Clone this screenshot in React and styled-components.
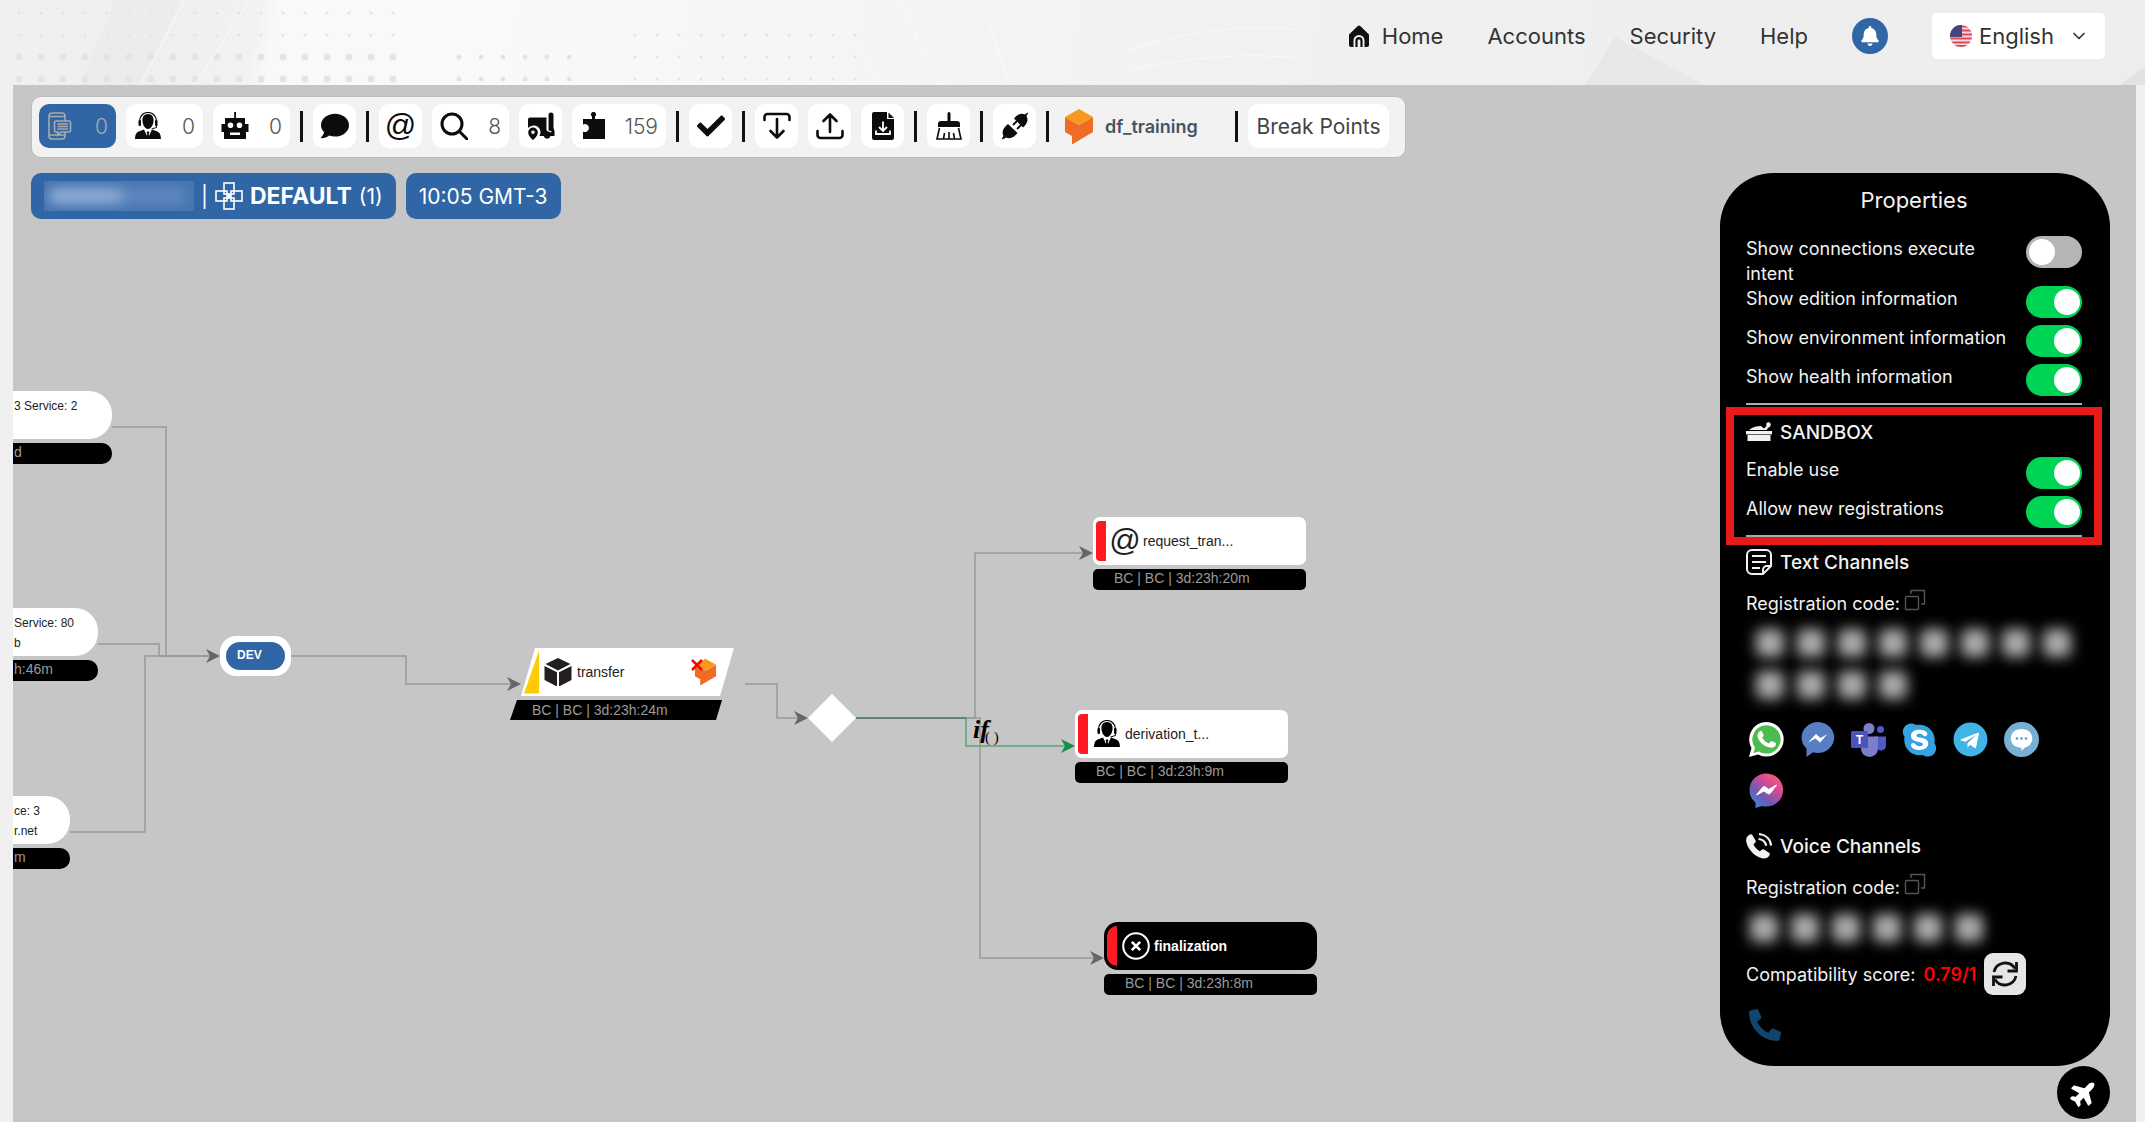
import React, { useState } from 'react';
import styled, { createGlobalStyle } from 'styled-components';
import { FaCheck, FaComment, FaBell, FaPlane, FaPhoneAlt, FaSkype, FaTelegram } from 'react-icons/fa';
import { LuChevronDown } from 'react-icons/lu';

const GlobalStyle = createGlobalStyle`
    * {
        box-sizing: border-box;
    }
    body {
        margin: 0;
        background: #f0f0f0;
        font-family: Inter, 'Open Sans', sans-serif;
        color: #333;
    }
    button, select, input {
        font: inherit;
        color: inherit;
        margin: 0;
    }
`;

/* ---------- icons ---------- */

const Svg = ({ size = 28, box = '0 0 28 28', children }) => (
    <svg width={size} height={size} viewBox={box} fill="currentColor" aria-hidden="true">{children}</svg>
);

const PhoneMessageIcon = () => (
    <Svg>
        <g fill="none" stroke="currentColor" strokeWidth="1.6">
            <rect x="2" y="1" width="16" height="26" rx="3" />
            <path d="M2 4.5h16M2 23h16" />
            <path d="M9 9h13a1.500 1.500 0 0 1 1.500 1.500v8a1.500 1.500 0 0 1-1.500 1.500h-8l-3 3v-3h-2a1.500 1.500 0 0 1-1.500-1.500v-8a1.500 1.500 0 0 1 1.500-1.500z" fill="#3066a6" />
            <path d="M10.500 12h10.500M10.500 14.500h10.500M10.500 17h10.500" />
        </g>
    </Svg>
);

const AgentIcon = () => (
    <Svg>
        <path d="M5.500 11v-2a8.500 8.500 0 0 1 17 0v2" fill="none" stroke="currentColor" strokeWidth="1.200" />
        <rect x="4.500" y="8" width="2.500" height="6" rx="1" />
        <rect x="21" y="8" width="2.500" height="6" rx="1" />
        <path d="M22.500 13v2.500l-5 1.500" fill="none" stroke="currentColor" strokeWidth="1" />
        <path d="M14 2c3.700 0 5.800 2.800 5.600 6.500-.2 4-2.400 8.500-5.600 8.500s-5.400-4.500-5.600-8.500C8.200 4.800 10.300 2 14 2z" />
        <path d="M1 27c.3-5 1.500-7 5-8l4-1.500L14 26l4-8.500 4 1.500c3.500 1 4.700 3 5 8z" />
        <path d="M14 19l1.500 1.500-.8 1.500.8 4.500h-3l.8-4.500-.8-1.500z" />
    </Svg>
);

const RobotIcon = () => (
    <Svg>
        <path fillRule="evenodd" d="M13.200 0h1.800v6H24v6h3.500v8H25v7H3v-7H.5v-8H4V6h9.200zM9.500 10.500a2.800 2.800 0 1 0 0 5.600 2.800 2.800 0 0 0 0-5.600zm9 0a2.800 2.800 0 1 0 0 5.600 2.800 2.800 0 0 0 0-5.600zM9 20.500V23h10v-2.500z" />
    </Svg>
);

const SearchIcon = () => (
    <Svg>
        <g fill="none" stroke="currentColor" strokeWidth="3" strokeLinecap="round">
            <circle cx="12" cy="12" r="10" />
            <path d="M19.500 19.500L27 27" />
        </g>
    </Svg>
);

const TruckIcon = () => (
    <Svg>
        <path d="M3 5.500h16.500V18h2V3a2.500 2.500 0 0 1 5 0v13l1 3v5h-4a3.500 3.500 0 0 1-6.800 0H12.500a7 7 0 0 0-2-9.500c-3-2-7-1-9.500 1.500V7.500a2 2 0 0 1 2-2z" />
        <path fillRule="evenodd" d="M6 15.500a4.800 4.800 0 0 1 4.800 4.800C10.800 24 7.500 27 6 28c-1.500-1-4.800-4-4.800-7.700A4.800 4.800 0 0 1 6 15.500zm0 3a1.800 1.800 0 1 0 0 3.600 1.800 1.800 0 0 0 0-3.600z" />
        <path d="M20.500 4v14.500l4 1.500" fill="none" stroke="#fff" strokeWidth="1.200" />
    </Svg>
);

const PuzzleIcon = () => (
    <Svg>
        <path d="M3 7h9V4.500a2.500 2.500 0 1 1 3 0V7h10v20H3v-7.500a4 4 0 1 0 0-7z" />
    </Svg>
);

const DownIcon = () => (
    <Svg>
        <g fill="none" stroke="currentColor" strokeWidth="2.600" strokeLinecap="round" strokeLinejoin="round">
            <path d="M1.500 8V5a3 3 0 0 1 3-3h19a3 3 0 0 1 3 3v3" />
            <path d="M14 7v18M7.500 19l6.500 6.500 6.500-6.500" />
        </g>
    </Svg>
);

const UpIcon = () => (
    <Svg>
        <g fill="none" stroke="currentColor" strokeWidth="2.600" strokeLinecap="round" strokeLinejoin="round">
            <path d="M1.500 19v4a3 3 0 0 0 3 3h19a3 3 0 0 0 3-3v-4" />
            <path d="M14 20V3M7.500 9L14 2.500 20.500 9" />
        </g>
    </Svg>
);

const FileIcon = () => (
    <Svg>
        <path d="M5 0h13v7h7v19a2 2 0 0 1-2 2H5a2 2 0 0 1-2-2V2a2 2 0 0 1 2-2z" />
        <path d="M19.500.5L25 6h-5.500z" />
        <path d="M14 9.500v9M10 15l4 4 4-4M7 18.500V22h14v-3.500" fill="none" stroke="#fff" strokeWidth="1.800" />
    </Svg>
);

const BroomIcon = () => (
    <Svg>
        <path d="M12.500 1.500a1.500 1.500 0 0 1 3 0V9H22a3 3 0 0 1 3 3v3H3v-3a3 3 0 0 1 3-3h6.500z" />
        <path d="M4.500 16L2 27h24l-2.500-11M8.500 27l1-6M14 27v-7M19.500 27l-1-6" fill="none" stroke="currentColor" strokeWidth="1.600" />
    </Svg>
);

const PlugIcon = () => (
    <Svg>
        <path d="M1 27c-.5-.5 1-2 1.500-3C.5 20 2 16 7 12l9.500 9c-3 4-7 6.500-11.500 4.500C4 26 1.800 27.800 1 27z" />
        <path d="M27 1c.5.5-1 2-1.500 3 2 4 1 7-3.500 11.500L13 6.500C17 2 20 .5 24 2.500 25 2 26.200.2 27 1z" />
        <path d="M16 9l-4 4M20 13l-4 4" stroke="currentColor" strokeWidth="1.800" />
    </Svg>
);

const HomeIcon = () => (
    <Svg size={22} box="0 0 22 22">
        <path d="M9.500 1.200a2.200 2.200 0 0 1 3 0L20.500 9c.4.400.5.800.5 1.400V20a2 2 0 0 1-2 2h-2.500v-6.500a5.500 5.500 0 0 0-11 0V22H3a2 2 0 0 1-2-2v-9.600c0-.6.1-1 .5-1.400z" />
        <path d="M7.400 22v-6.400a3.600 3.600 0 0 1 7.200 0V22h-2.200v-6a1.400 1.400 0 0 0-2.800 0v6z" />
    </Svg>
);

const CrossIcon = () => (
    <Svg>
        <g fill="none" stroke="currentColor" strokeWidth="1.600">
            <rect x="9" y="1" width="10" height="11" />
            <rect x="9" y="16" width="10" height="11" />
            <rect x="1" y="9" width="11" height="10" />
            <rect x="16" y="9" width="11" height="10" />
            <path d="M12 12l4 4M16 12l-4 4" />
        </g>
    </Svg>
);

const DialogflowLogo = ({ width = 30, height = 37 }) => (
    <svg width={width} height={height} viewBox="0 0 30 37" aria-hidden="true">
        <path d="M1 9v15l7 4v8.500L29 24V9l-14 8z" fill="#ee6c23" />
        <path d="M15 1L1 9l14 8 14-8z" fill="#f8991d" />
    </svg>
);

const CubeIcon = () => (
    <Svg>
        <g fill="#231f20">
            <path d="M14 0L1.500 6 14 12.500 26.500 6z" />
            <path d="M.5 8L13 14.300V28.500L.5 22z" />
            <path d="M27.500 8L15 14.300V28.500L27.500 22z" />
        </g>
    </Svg>
);

const CloseIcon = () => (
    <Svg>
        <g fill="none" stroke="currentColor" strokeWidth="2">
            <circle cx="14" cy="14" r="12.800" />
            <path d="M9.800 9.800l8.400 8.400M18.200 9.800l-8.400 8.400" strokeWidth="2.600" />
        </g>
    </Svg>
);

const SandboxIcon = () => (
    <Svg size={26} box="0 0 26 26">
        <path d="M0 12h26v3.500h-1.500V22h-23v-6.500H0z" />
        <path d="M3 11c4-3.500 8-4 12-4l3 2.500 2.500-2.500c-1-2.500 1-4.500 3-3.500 2 1 1.500 4.500-1 5L20.500 11z" />
        <path d="M1 15.500h24" stroke="#000" strokeWidth=".6" />
    </Svg>
);

const NoteIcon = () => (
    <Svg size={26} box="0 0 26 26">
        <g fill="none" stroke="currentColor" strokeWidth="2">
            <path d="M6 1h14a5 5 0 0 1 5 5v11l-8 8H6a5 5 0 0 1-5-5V6a5 5 0 0 1 5-5z" />
            <path d="M25 17h-4a4 4 0 0 0-4 4v4M6 7h14M6 13h14M6 19h8" />
        </g>
    </Svg>
);

const CallIcon = () => (
    <Svg size={26} box="0 0 26 26">
        <path d="M6.500 2.200l3 5.300c.5 1 .2 2-.6 2.600L7.500 11.300c1.200 3 3.500 5.500 6.500 7l1.600-1.500c.7-.7 1.700-.8 2.500-.3l4.900 3.200c.9.600 1.100 1.600.5 2.500C22 24.700 19.500 26 16 25.300 8 23.500 1 15 .2 8 0 5 1.200 3 3.800 1.600c1-.6 2.200-.4 2.700.6z" />
        <path d="M13 1c7 .8 11.500 5.500 12.200 11.500M12.500 6c4.200.3 7 3 7.700 6.800" fill="none" stroke="currentColor" strokeWidth="2.200" />
    </Svg>
);

const CopyIcon = () => (
    <Svg size={22} box="0 0 22 22">
        <g fill="none" stroke="#555" strokeWidth="1.400">
            <rect x="1.500" y="7.500" width="13" height="13" rx="1" />
            <path d="M7 5V1.500h13.500V15H17" />
        </g>
    </Svg>
);

const RefreshIcon = () => (
    <Svg>
        <g fill="none" stroke="currentColor" strokeWidth="2.800">
            <path d="M3 12A11.500 11.500 0 0 1 24 8.500M25 16A11.500 11.500 0 0 1 4 19.500" />
            <path d="M25.500 2v9h-9M2.500 26v-9h9" />
        </g>
    </Svg>
);

const FlagIcon = () => (
    <svg width="22" height="22" viewBox="0 0 22 22" aria-hidden="true">
        <clipPath id="flag"><circle cx="11" cy="11" r="11" /></clipPath>
        <g clipPath="url(#flag)">
            <path d="M0 0h22v22H0z" fill="#f6d9dc" />
            <path d="M0 1.500h22M0 5.500h22M0 9.500h22M0 13.500h22M0 17.500h22M0 21h22" stroke="#dc4a5c" strokeWidth="2" />
            <path d="M0 0h12v12H0z" fill="#46467f" />
        </g>
    </svg>
);

const WhatsappLogo = () => (
    <svg width="35" height="35" viewBox="0 0 35 35" aria-hidden="true">
        <path d="M17.500 0a17.300 17.300 0 1 1-8.400 32.500L0 35l2.500-9A17.400 17.400 0 0 1 17.500 0z" fill="#fff" />
        <path d="M17.500 3.200A14.200 14.200 0 1 1 10 29.500l-5.500 1.400L6 25.600A14.200 14.200 0 0 1 17.500 3.200z" fill="#4dbb4f" />
        <path d="M10.500 9.500c1-1 2.200-.8 2.700.2l1.400 3.200c.3.800-.9 2-1.400 2.600 1.500 3 3.700 4.800 6.700 6l1.800-2.100c.5-.6 1-.5 1.600-.2l3.200 1.600c.6.300.6.800.4 1.600-.6 2.400-3 3.600-5.200 3.300C14.500 24.700 9.500 19 8.600 14.500c-.3-2 .5-3.800 1.900-5z" fill="#fff" />
    </svg>
);

const MessengerFlatLogo = () => (
    <svg width="35" height="35" viewBox="0 0 35 35" aria-hidden="true">
        <path d="M18 0a16.300 15.500 0 1 1-5 30.300L6.500 35v-8.500A15.500 15.500 0 0 1 1.500 16C1.500 7 9 0 18 0z" fill="#587fc4" />
        <path d="M8 20.500l8-8.500 4.500 4 7-4-7.500 8.500-4.500-4z" fill="#fff" />
    </svg>
);

const TeamsLogo = () => (
    <svg width="35" height="35" viewBox="0 0 35 35" aria-hidden="true">
        <circle cx="29.500" cy="7.500" r="3.500" fill="#5059c9" />
        <path d="M23 14.500h12v9a5 5 0 0 1-9 3z" fill="#5059c9" />
        <circle cx="18" cy="6.500" r="5.500" fill="#7b7fc9" />
        <path d="M10 14.500h17v12a8.500 8.500 0 0 1-17 0z" fill="#7b7fc9" />
        <rect x="0" y="9" width="17" height="17" rx="1.500" fill="#4b53bc" />
        <text x="8.500" y="22" textAnchor="middle" fontFamily="Inter, sans-serif" fontWeight="700" fontSize="12" fill="#fff">T</text>
    </svg>
);

const WebchatLogo = () => (
    <svg width="35" height="35" viewBox="0 0 35 35" aria-hidden="true">
        <circle cx="17.500" cy="17.500" r="17.500" fill="#78b0d4" />
        <path d="M17.500 7c6.500 0 10.800 4 10.800 9.500 0 4.500-3 8-7.300 9l-3.500 3.500v-3.200C11 25.800 6.800 22 6.800 16.500S11 7 17.500 7z" fill="#fff" />
        <g fill="#5e9dc7">
            <circle cx="13" cy="16.500" r="1.300" />
            <circle cx="17.500" cy="16.500" r="1.300" />
            <circle cx="22" cy="16.500" r="1.300" />
        </g>
    </svg>
);

const MessengerLogo = () => (
    <svg width="35" height="35" viewBox="0 0 35 35" aria-hidden="true">
        <linearGradient id="msg" x1="0.100" y1="1" x2="0.850" y2="0.050">
            <stop offset="0" stopColor="#3f8ad6" />
            <stop offset="0.350" stopColor="#6a5cb4" />
            <stop offset="0.700" stopColor="#d44a98" />
            <stop offset="1" stopColor="#fb6170" />
        </linearGradient>
        <path d="M17.500 0.500a17 16.500 0 1 1-4.500 32.500L6.500 35v-5.500A16 16 0 0 1 .5 17C.5 7.500 8 .5 17.500.5z" fill="url(#msg)" />
        <path d="M7.500 22l6-7.500c.8-1 2-1.200 3-.4l3.200 2.300 7.800-4.400-6 8c-.8 1-2 1.200-3 .4l-3.500-2.400z" fill="#fff" stroke="#fff" strokeLinejoin="round" />
    </svg>
);

/* ---------- header ---------- */

const Header = styled.header`
    position: relative;
    display: flex;
    justify-content: flex-end;
    align-items: flex-start;
    height: 85px;
    padding: 13px 40px 0;
    overflow: hidden;
    background: linear-gradient(100deg, #f0f0f0 0, #efefef 8%, #f2f2f2 12%, #f9f9f9 13%, #f9f9f9 24%, #f5f5f5 40%, #f2f2f2 55%, #eeeeee 80%, #ededed 100%);
`;

const Backdrop = styled.svg`
    position: absolute;
    inset: 0;
    width: 100%;
    height: 100%;
`;

const Nav = styled.nav`
    position: relative;
    display: flex;
    align-items: center;
    gap: 44px;
    height: 46px;
`;

const NavLink = styled.a`
    display: flex;
    align-items: center;
    gap: 12px;
    color: #333;
    font-size: 22px;
    text-decoration: none;
    svg {
        color: #111;
    }
`;

const BellButton = styled.button`
    display: flex;
    align-items: center;
    justify-content: center;
    width: 36px;
    height: 36px;
    border: none;
    border-radius: 50%;
    padding: 0;
    background: #3066a6;
    color: #fff;
`;

const Language = styled.label`
    display: flex;
    align-items: center;
    gap: 7px;
    width: 173px;
    height: 46px;
    padding: 0 16px 0 18px;
    border-radius: 5px;
    background: #fff;
    font-size: 22px;
    select {
        flex: 1;
        min-width: 0;
        appearance: none;
        border: none;
        padding: 0;
        background: transparent;
    }
`;

const dots = [];
[13, 35, 57, 79].forEach((y, row) => {
    for (let i = 0; i < 47; i++) {
        const x = 19 + i * 22;
        const wide = x < 400;
        const middle = x > 450 && x < 570 && row > 1;
        const far = x > 600 && x < 860 && x !== 613 && row > 0;
        if (!wide && !middle && !far) continue;
        const r = row < 2 || far ? 1.5 : middle ? 2.5 : 3.5;
        dots.push({ x, y, r });
    }
});

/* ---------- workspace ---------- */

const Workspace = styled.main`
    position: relative;
    min-height: calc(100vh - 85px);
    margin: 0 9px 0 13px;
    padding: 11px 26px 2px 18px;
    overflow: hidden;
    background: #c6c6c6;
`;

const Toolbar = styled.div`
    position: relative;
    display: flex;
    align-items: center;
    gap: 10px;
    width: fit-content;
    height: 62px;
    padding: 0 16px 2px 7px;
    border: 1px solid #bbb;
    border-radius: 10px;
    background: #f2f2f2;
`;

const ToolButton = styled.button`
    display: flex;
    align-items: center;
    justify-content: ${p => (p.$count ? 'space-between' : 'center')};
    width: ${p => (p.$wide ? '94px' : p.$count ? '77px' : '43px')};
    height: 44px;
    padding: 0 ${p => (p.$count ? '8px' : '0')};
    border: none;
    border-radius: 10px;
    background: ${p => (p.$active ? '#3066a6' : '#fff')};
    color: ${p => (p.$active ? '#aaa' : '#0c0c0c')};
    font-size: 21px;
`;

const Count = styled.span`
    color: ${p => (p.$active ? '#aaa' : '#555')};
    font-weight: 300;
`;

const Separator = styled.span`
    width: 3px;
    height: 31px;
    background: #111;
`;

const Bot = styled.span`
    display: flex;
    align-items: center;
    gap: 11px;
    width: 166px;
    padding-left: 5px;
    color: #465363;
    font-size: 18px;
    font-weight: 600;
`;

const BreakButton = styled(ToolButton)`
    color: #444;
    width: 141px;
    white-space: nowrap;
`;

const AtSign = styled.span`
    width: 28px;
    font-family: 'Liberation Sans', Arial, sans-serif;
    font-size: 31px;
    line-height: 28px;
    display: flex;
    justify-content: center;
`;

const Body = styled.div`
    display: flex;
    justify-content: space-between;
    align-items: flex-start;
    margin-top: 15px;
`;

const Pills = styled.div`
    position: relative;
    display: flex;
    gap: 10px;
`;

const Pill = styled.div`
    display: flex;
    align-items: center;
    gap: 7px;
    height: 46px;
    padding: 0 13px;
    border-radius: 10px;
    background: #3066a6;
    color: #fff;
    font-size: 21px;
    white-space: nowrap;
    strong {
        font-size: 23px;
    }
`;

const Hidden = styled.span`
    width: 150px;
    height: 30px;
    padding: 0 6px;
    overflow: hidden;
    background: #4775b0;
    span {
        display: block;
        width: 134px;
        height: 16px;
        margin-top: 7px;
        background: linear-gradient(90deg, #8fadd6 50%, #5f88c0 56%);
        filter: blur(6px);
    }
`;

/* ---------- flow canvas ---------- */

const Canvas = styled.div`
    position: absolute;
    inset: 0;
    overflow: hidden;
    font-family: 'Liberation Sans', Arial, sans-serif;
`;

const Edges = styled.svg`
    position: absolute;
    inset: 0;
    width: 100%;
    height: 100%;
`;

const Placed = styled.div`
    position: absolute;
    left: ${p => p.$x}px;
    top: ${p => p.$y}px;
    display: flex;
    flex-direction: column;
    gap: 4px;
    width: ${p => p.$w || 213}px;
`;

const Card = styled.div`
    display: flex;
    align-items: center;
    gap: 4px;
    height: 48px;
    padding-left: 3px;
    border-radius: ${p => (p.$dark ? '14px' : '7px')};
    background: ${p => (p.$dark ? '#000' : '#fff')};
    color: ${p => (p.$dark ? '#fff' : '#222')};
    font-size: 14px;
    font-weight: ${p => (p.$dark ? 700 : 400)};
    svg {
        color: ${p => (p.$dark ? '#fff' : '#000')};
    }
`;

const Mark = styled.span`
    width: 10px;
    height: 40px;
    margin-right: 1px;
    border-radius: ${p => (p.$dark ? '10px 0 0 10px' : '4px 0 0 4px')};
    background: #ff1a22;
`;

const Stamp = styled.div`
    height: 21px;
    padding-left: ${p => (p.$open ? 1 : 21)}px;
    border-radius: ${p => (p.$open ? '0 10px 10px 0' : '5px')};
    background: #000;
    color: #9a9a9a;
    font-size: 14px;
    line-height: 19px;
    white-space: nowrap;
`;

const Entry = styled.div`
    height: 48px;
    padding: 5px 0 0 1px;
    border-radius: 0 23px 23px 0;
    background: #fff;
    color: #222;
    font-size: 12px;
    line-height: 20px;
    white-space: pre-line;
`;

const DevNode = styled.div`
    position: absolute;
    left: 207px;
    top: 551px;
    width: 71px;
    height: 40px;
    padding: 0 0 0 11px;
    border: 6px solid #fff;
    border-radius: 16px;
    background: #fff;
    &::before {
        content: '';
        position: absolute;
        inset: 0;
        border-radius: 14px;
        background: #3066a6;
    }
    span {
        position: relative;
        color: #fff;
        font-size: 12px;
        font-weight: 700;
        line-height: 27px;
    }
`;

const Slanted = styled.div`
    display: flex;
    align-items: center;
    gap: 5px;
    height: ${p => (p.$dark ? 20 : 48)}px;
    margin-left: ${p => (p.$dark ? 0 : 11)}px;
    width: ${p => (p.$dark ? 212 : 213)}px;
    padding-left: ${p => (p.$dark ? 22 : 3)}px;
    clip-path: ${p => (p.$dark
        ? 'polygon(7px 0, 100% 0, calc(100% - 6px) 100%, 0 100%)'
        : 'polygon(14px 0, 100% 0, calc(100% - 14px) 100%, 0 100%)')};
    background: ${p => (p.$dark ? '#000' : '#fff')};
    color: ${p => (p.$dark ? '#9a9a9a' : '#222')};
    font-size: 14px;
`;

const Warning = styled.span`
    width: 15px;
    height: 43px;
    background: #ffcb05;
    clip-path: polygon(100% 0, 100% 100%, 0 100%);
`;

const BotMark = styled.span`
    position: relative;
    display: flex;
    margin: 0 17px 0 auto;
    svg + svg {
        position: absolute;
        left: -3px;
        top: 1px;
    }
`;

const Condition = styled.div`
    position: absolute;
    left: 960px;
    top: 631px;
    color: #000;
    font-family: 'Liberation Serif', serif;
    font-size: 26px;
    font-style: italic;
    font-weight: 700;
    line-height: 28px;
    sub {
        margin-left: -4px;
        font-size: 15px;
        font-style: normal;
        font-weight: 400;
        line-height: 1px;
        vertical-align: -4px;
    }
`;

const arrow = (x, y, color) => (
    <path key={`${x}-${y}`} d={`M${x} ${y}l-14 -7 4 7 -4 7z`} fill={color} />
);

/* ---------- properties panel ---------- */

const Side = styled.aside`
    position: relative;
    display: flex;
    flex-direction: column;
    align-items: flex-end;
    width: 390px;
`;

const Panel = styled.section`
    width: 100%;
    padding: 14px 28px 25px 26px;
    border-radius: 54px;
    background: #000;
    color: #f2f2f2;
    font-size: 18px;
    font-weight: 400;
`;

const Title = styled.h2`
    margin: 0 0 23px;
    font-size: 22px;
    font-weight: 400;
    line-height: 26px;
    text-align: center;
`;

const Row = styled.label`
    display: flex;
    justify-content: space-between;
    align-items: flex-start;
    min-height: 39px;
    line-height: 25px;
    span {
        max-width: 270px;
    }
`;

const Switch = styled.input`
    flex: none;
    position: relative;
    appearance: none;
    width: 56px;
    height: 32px;
    border-radius: 16px;
    background: #b5b5b5;
    &::before {
        content: '';
        position: absolute;
        left: 3px;
        top: 3px;
        width: 26px;
        height: 26px;
        border-radius: 50%;
        background: #fff;
    }
    &:checked {
        background: #00d455;
    }
    &:checked::before {
        left: 28px;
    }
`;

const Rule = styled.hr`
    height: 2px;
    margin: 0;
    border: none;
    background: #aaa;
`;

const Highlight = styled.div`
    margin: 2px -20px 0;
    padding: 0 12px;
    border: 8px solid #e81b1b;
`;

const Heading = styled.h3`
    display: flex;
    align-items: center;
    gap: 8px;
    height: 34px;
    margin: ${p => p.$top || 0}px 0 ${p => p.$bottom || 11}px;
    font-size: 19px;
    font-weight: 500;
`;

const CodeLine = styled.div`
    display: flex;
    align-items: center;
    gap: 4px;
    height: 26px;
    button {
        display: flex;
        border: none;
        padding: 0 0 6px;
        background: none;
    }
`;

const Blobs = styled.div`
    display: flex;
    gap: 13px;
    padding: ${p => (p.$first ? 13 : 14)}px 0 0 ${p => p.$pad}px;
    span {
        width: 28px;
        height: 28px;
        border-radius: 6px;
        background: #adadad;
        filter: blur(7px);
    }
`;

const Channels = styled.div`
    display: flex;
    flex-wrap: wrap;
    gap: 16px;
    margin: 23px 0 0;
    padding-left: 3px;
`;

const Logo = styled.span`
    display: flex;
    align-items: center;
    justify-content: center;
    width: 35px;
    height: 35px;
    color: ${p => p.$color};
    background: radial-gradient(#fff 55%, transparent 56%);
`;

const Score = styled.div`
    display: flex;
    align-items: center;
    gap: 8px;
    margin-top: 11px;
    strong {
        color: #f00;
        font-weight: 600;
    }
`;

const RefreshButton = styled.button`
    display: flex;
    align-items: center;
    justify-content: center;
    width: 42px;
    height: 42px;
    border: none;
    border-radius: 9px;
    padding: 0;
    background: #e6e6e6;
    color: #111;
`;

const Voice = styled.div`
    display: flex;
    margin-top: 14px;
    padding-left: 3px;
    color: #10456f;
`;

const Fab = styled.button`
    display: flex;
    align-items: center;
    justify-content: center;
    width: 53px;
    height: 53px;
    border: none;
    border-radius: 50%;
    padding: 0;
    background: #000;
    color: #fff;
    svg {
        transform: rotate(-45deg);
    }
`;

const Toggle = ({ label, on = true }) => {
    const [checked, setChecked] = useState(on);
    return (
        <Row>
            <span>{label}</span>
            <Switch type="checkbox" checked={checked} onChange={e => setChecked(e.target.checked)} />
        </Row>
    );
};

const MaskedCode = ({ count, pad, first }) => (
    <Blobs $pad={pad} $first={first} aria-hidden="true">
        {Array.from({ length: count }, (_, i) => <span key={i} />)}
    </Blobs>
);

const FlowNode = ({ x, y, icon, title, stamp, dark }) => (
    <Placed $x={x} $y={y}>
        <Card $dark={dark}>
            <Mark $dark={dark} />
            {icon}
            {title}
        </Card>
        <Stamp>{stamp}</Stamp>
    </Placed>
);

// Entry nodes are scrolled past the left edge, so their left side is flat
const EntryNode = ({ y, width, text, stamp }) => (
    <Placed $x={0} $y={y} $w={width}>
        <Entry>{text}</Entry>
        <Stamp $open>{stamp}</Stamp>
    </Placed>
);

function App() {
    const [language, setLanguage] = useState('en');

    return (
        <>
            <GlobalStyle />
            <Header>
                <Backdrop aria-hidden="true">
                    <path d="M1585 85l30-48 90 48z" fill="#e8e8e8" />
                    <path d="M2120 85l25-18v18z" fill="#e2e2e2" />
                    <path d="M80 85L115 0h65l-40 85z" fill="#ececec" />
                    {dots.map(({ x, y, r }) => <circle key={`${x}-${y}`} cx={x} cy={y} r={r} fill="#e4e4e4" />)}
                    <g fill="none" stroke="#fafafa">
                        <path d="M140 85L185 0M195 85L250 0M940 85L1060 20M1130 50q90-30 170-20M1130 70q90-20 170-12" />
                        <path d="M830 0l50 85M900 0l38 85M980 0l30 85" />
                    </g>
                </Backdrop>
                <Nav>
                    <NavLink href="#home"><HomeIcon />Home</NavLink>
                    <NavLink href="#accounts">Accounts</NavLink>
                    <NavLink href="#security">Security</NavLink>
                    <NavLink href="#help">Help</NavLink>
                    <BellButton aria-label="Notifications"><FaBell size={20} /></BellButton>
                    <Language>
                        <FlagIcon />
                        <select aria-label="Language" value={language} onChange={e => setLanguage(e.target.value)}>
                            <option value="en">English</option>
                            <option value="es">Español</option>
                        </select>
                        <LuChevronDown size={20} />
                    </Language>
                </Nav>
            </Header>

            <Workspace>
                <Canvas>
                    <Edges aria-hidden="true">
                        <g fill="none" stroke="#999" strokeWidth="1.500">
                            <path d="M99 342h54v229h45" />
                            <path d="M85 559h61v12h52" />
                            <path d="M57 747h75V571h66" />
                            <path d="M278 571h115v28h105" />
                            <path d="M732 599h32v34h22" />
                            <path d="M843 633h119V468h108" />
                            <path d="M843 633h124v240h114" />
                            <path d="M843 633h110v28h100" stroke="#5aa57c" />
                            <path d="M843 633h110" stroke="#5d8570" strokeWidth="2" />
                        </g>
                        {[[207, 571], [508, 599], [795, 633], [1080, 468], [1091, 873]].map(([x, y]) => arrow(x, y, '#666'))}
                        {arrow(1062, 661, '#159048')}
                        <path d="M819 609l24 24-24 24-24-24z" fill="#fff" />
                    </Edges>
                    <EntryNode y={306} width={99} text="3 Service: 2" stamp="d" />
                    <EntryNode y={523} width={85} text={'Service: 80\nb'} stamp="h:46m" />
                    <EntryNode y={711} width={57} text={'ce: 3\nr.net'} stamp="m" />
                    <DevNode><span>DEV</span></DevNode>
                    <Placed $x={497} $y={563} $w={224}>
                        <Slanted>
                            <Warning />
                            <CubeIcon />
                            transfer
                            <BotMark>
                                <DialogflowLogo width={23} height={28} />
                                <svg width="12" height="12" viewBox="0 0 12 12" aria-hidden="true">
                                    <path d="M1 1l10 10M11 1L1 11" stroke="#f00" strokeWidth="2.500" />
                                </svg>
                            </BotMark>
                        </Slanted>
                        <Slanted $dark>BC | BC | 3d:23h:24m</Slanted>
                    </Placed>
                    <FlowNode x={1080} y={432} icon={<AtSign>@</AtSign>} title="request_tran..." stamp="BC | BC | 3d:23h:20m" />
                    <FlowNode x={1062} y={625} icon={<AgentIcon />} title="derivation_t..." stamp="BC | BC | 3d:23h:9m" />
                    <FlowNode x={1091} y={837} icon={<CloseIcon />} title="finalization" stamp="BC | BC | 3d:23h:8m" dark />
                    <Condition>if<sub>( )</sub></Condition>
                </Canvas>

                <Toolbar>
                    <ToolButton $count $active aria-label="Messages"><PhoneMessageIcon /><Count $active>0</Count></ToolButton>
                    <ToolButton $count aria-label="Agents"><AgentIcon /><Count>0</Count></ToolButton>
                    <ToolButton $count aria-label="Bots"><RobotIcon /><Count>0</Count></ToolButton>
                    <Separator />
                    <ToolButton aria-label="Comment"><FaComment size={28} /></ToolButton>
                    <Separator />
                    <ToolButton aria-label="Intents"><AtSign>@</AtSign></ToolButton>
                    <ToolButton $count aria-label="Search"><SearchIcon /><Count>8</Count></ToolButton>
                    <ToolButton aria-label="Derivation"><TruckIcon /></ToolButton>
                    <ToolButton $count $wide aria-label="Components"><PuzzleIcon /><Count>159</Count></ToolButton>
                    <Separator />
                    <ToolButton aria-label="Validate"><FaCheck size={28} /></ToolButton>
                    <Separator />
                    <ToolButton aria-label="Import"><DownIcon /></ToolButton>
                    <ToolButton aria-label="Export"><UpIcon /></ToolButton>
                    <ToolButton aria-label="Download file"><FileIcon /></ToolButton>
                    <Separator />
                    <ToolButton aria-label="Clean"><BroomIcon /></ToolButton>
                    <Separator />
                    <ToolButton aria-label="Connect"><PlugIcon /></ToolButton>
                    <Separator />
                    <Bot><DialogflowLogo />df_training</Bot>
                    <Separator />
                    <BreakButton>Break Points</BreakButton>
                </Toolbar>

                <Body>
                    <Pills>
                        <Pill>
                            <Hidden><span /></Hidden>
                            |
                            <CrossIcon />
                            <strong>DEFAULT</strong>
                            (1)
                        </Pill>
                        <Pill>10:05 GMT-3</Pill>
                    </Pills>

                    <Side>
                        <Panel>
                            <Title>Properties</Title>
                            <Toggle label="Show connections execute intent" on={false} />
                            <Toggle label="Show edition information" />
                            <Toggle label="Show environment information" />
                            <Toggle label="Show health information" />
                            <Rule />
                            <Highlight>
                                <Heading $bottom={8}><SandboxIcon />SANDBOX</Heading>
                                <Toggle label="Enable use" />
                                <Toggle label="Allow new registrations" />
                                <Rule />
                            </Highlight>
                            <Heading><NoteIcon />Text Channels</Heading>
                            <CodeLine>Registration code:<button aria-label="Copy text code"><CopyIcon /></button></CodeLine>
                            <MaskedCode count={8} pad={10} first />
                            <MaskedCode count={4} pad={10} />
                            <Channels>
                                <WhatsappLogo />
                                <MessengerFlatLogo />
                                <TeamsLogo />
                                <Logo $color="#36a3e0"><FaSkype size={38} /></Logo>
                                <Logo $color="#41b4e6"><FaTelegram size={35} /></Logo>
                                <WebchatLogo />
                                <MessengerLogo />
                            </Channels>
                            <Heading $top={21}><CallIcon />Voice Channels</Heading>
                            <CodeLine>Registration code:<button aria-label="Copy voice code"><CopyIcon /></button></CodeLine>
                            <MaskedCode count={6} pad={4} />
                            <Score>
                                Compatibility score: <strong>0.79/1</strong>
                                <RefreshButton aria-label="Refresh score"><RefreshIcon /></RefreshButton>
                            </Score>
                            <Voice><FaPhoneAlt size={32} /></Voice>
                        </Panel>
                        <Fab aria-label="Fly to"><FaPlane size={28} /></Fab>
                    </Side>
                </Body>
            </Workspace>
        </>
    );
}

export default App;
